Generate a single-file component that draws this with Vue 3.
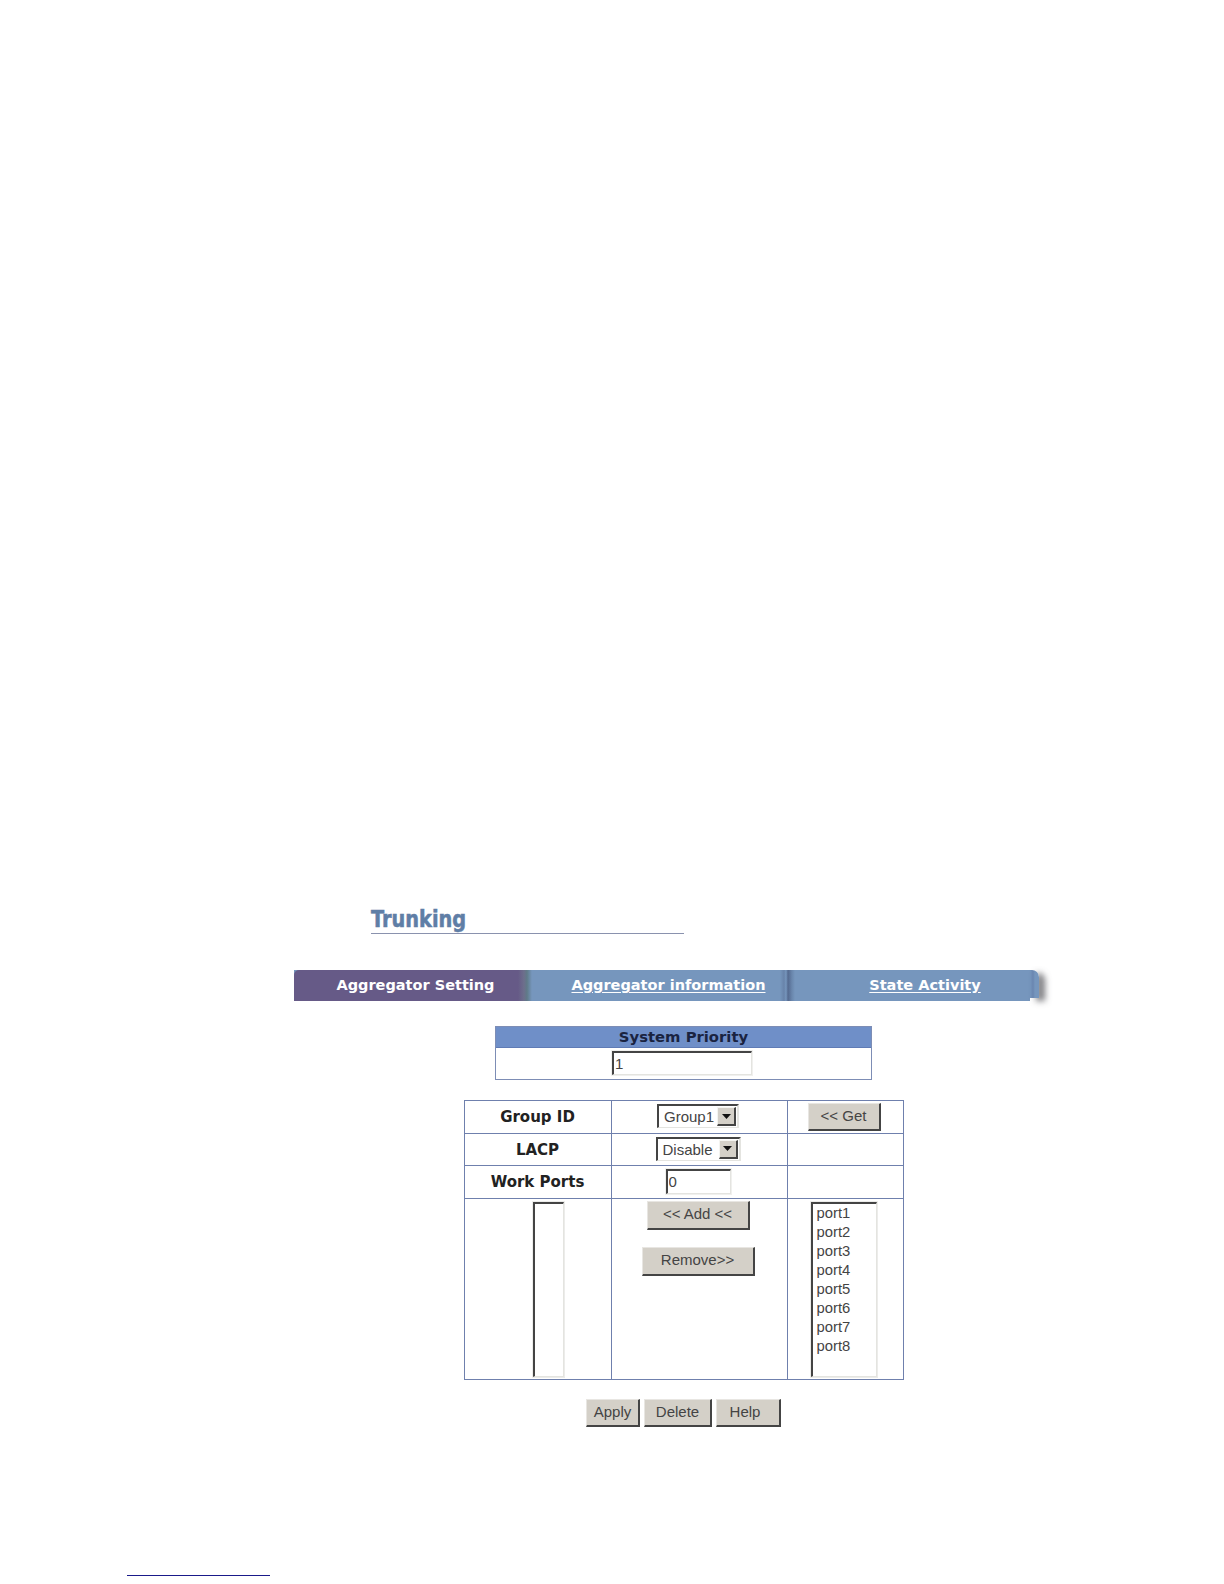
<template>
  <div class="page">

    <!-- TITLE -->
    <div class="title-block">
      <h1 class="title">Trunking</h1>
    </div>

    <!-- TABS -->
    <div class="tab-bar">
      <div class="tab tab-active">Aggregator Setting</div>
      <div class="tab tab-info"><a>Aggregator information</a></div>
      <div class="tab tab-state"><a>State Activity</a></div>
      <div class="tab-end"></div>
    </div>

    <div class="form-area">

      <!-- SYSTEM PRIORITY -->
      <div class="priority">
        <div class="priority-head">System Priority</div>
        <div class="priority-body">
          <input class="field priority-input" type="text" value="1" />
        </div>
      </div>

      <!-- GROUP TABLE -->
      <table class="group-table">
        <colgroup>
          <col class="col-a" />
          <col class="col-b" />
          <col class="col-c" />
        </colgroup>
        <tbody>
          <tr class="row-1">
            <th>Group ID</th>
            <td class="mid">
              <div class="select select-group">
                <span class="select-value">Group1</span>
                <span class="select-arrow"><svg width="9" height="5" viewBox="0 0 9 5"><path d="M0 0h9L4.5 5z" fill="#111" /></svg></span>
              </div>
            </td>
            <td><button class="btn btn-get">&lt;&lt; Get</button></td>
          </tr>
          <tr class="row-2">
            <th>LACP</th>
            <td class="mid">
              <div class="select select-lacp">
                <span class="select-value">Disable</span>
                <span class="select-arrow"><svg width="9" height="5" viewBox="0 0 9 5"><path d="M0 0h9L4.5 5z" fill="#111" /></svg></span>
              </div>
            </td>
            <td></td>
          </tr>
          <tr class="row-3">
            <th>Work Ports</th>
            <td class="mid"><input class="field ports-input" type="text" value="0" /></td>
            <td></td>
          </tr>
          <tr class="row-4">
            <td class="top"><div class="listbox list-left"></div></td>
            <td class="top">
              <button class="btn btn-add">&lt;&lt; Add &lt;&lt;</button>
              <button class="btn btn-remove">Remove&gt;&gt;</button>
            </td>
            <td class="top">
              <div class="listbox list-right">
                <div v-for="port in ports" :key="port" class="port">{{ port }}</div>
              </div>
            </td>
          </tr>
        </tbody>
      </table>

      <!-- ACTIONS -->
      <div class="actions">
        <button class="btn btn-apply">Apply</button>
        <button class="btn btn-delete">Delete</button>
        <button class="btn btn-help">Help</button>
      </div>

    </div>

    <!-- FOOTNOTE RULE -->
    <div class="foot-rule"></div>

  </div>
</template>

<script setup>
const ports = ['port1', 'port2', 'port3', 'port4', 'port5', 'port6', 'port7', 'port8']
</script>

<style>
html, body {
  background: #fff;
}
</style>

<style scoped>
.page {
  width: 1224px;
  height: 1584px;
  overflow: hidden;
  padding-top: 908px;
  box-sizing: border-box;
  background: #fff;
  font-family: "Liberation Sans", Arial, sans-serif;
}

.title-block {
  margin-left: 371px;
  width: 313px;
  height: 25px;
  border-bottom: 1px solid #8a92ae;
}

.title {
  margin: 0;
  font-family: "DejaVu Sans", sans-serif;
  font-size: 23px;
  font-weight: 700;
  line-height: 22px;
  color: #5f7ea6;
  transform: scaleX(0.84);
  transform-origin: left center;
  -webkit-text-stroke: 0.6px #5f7ea6;
}

.tab-bar {
  position: relative;
  display: flex;
  margin-top: 36px;
  margin-left: 294px;
  width: 736px;
  height: 31px;
  font-family: "DejaVu Sans", Verdana, sans-serif;
  font-size: 14.5px;
  font-weight: 700;
  line-height: 31px;
  color: #fff;
  background: #7696bd;
}

.tab {
  text-align: center;
  box-sizing: border-box;
}

.tab a {
  color: #fff;
  text-decoration: underline;
  text-underline-offset: 2px;
}

.tab-active {
  width: 238px;
  padding-left: 5px;
  background: linear-gradient(90deg, #665a87 0, #665a87 224px, #6d6f8c 230px, #5f7a88 233px, #7696bd 238px);
  border-top-left-radius: 5px;
}

.tab-info {
  width: 263px;
  padding-left: 10px;
  background: linear-gradient(90deg, #7696bd 0, #7696bd 248px, #6883aa 252px, #7696bd 254px, #54698f 256px, #6a87ad 260px, #7696bd 263px);
}

.tab-state {
  width: 235px;
  padding-left: 25px;
}

.tab-end {
  position: absolute;
  left: 736px;
  top: 0;
  width: 9px;
  height: 28px;
  background: linear-gradient(90deg, #7696bd 0, #6a86b0 3px, #7696bd 5px);
  border-top-right-radius: 7px;
  box-shadow: 6px 3px 6px 0 rgba(70, 70, 75, 0.7);
}

.form-area {
  display: flex;
  flex-direction: column;
  align-items: center;
  margin-left: 464px;
  width: 439px;
}

.priority {
  margin-top: 25px;
  width: 377px;
  height: 54px;
  box-sizing: border-box;
  border: 1px solid #7d8db5;
}

.priority-head {
  height: 20px;
  border-bottom: 1px solid #5f7bb5;
  background: #6f8fc8;
  font-family: "DejaVu Sans", Verdana, sans-serif;
  font-size: 14.8px;
  font-weight: 700;
  line-height: 19px;
  text-align: center;
  color: #1a2340;
}

.priority-body {
  display: flex;
  justify-content: center;
  padding: 3px 3px 0 0;
}

.field {
  display: block;
  box-sizing: border-box;
  margin: 0;
  padding: 0 0 0 1px;
  border-style: solid;
  border-width: 2px 1px 1px 2px;
  border-color: #444 #e4e4e0 #e4e4e0 #444;
  outline: 1px solid #f0f0ee;
  background: #fff;
  font-family: "Liberation Sans", Arial, sans-serif;
  font-size: 15px;
  color: #444;
}

.priority-input {
  width: 140px;
  height: 24px;
}

.group-table {
  margin-top: 20px;
  width: 439px;
  table-layout: fixed;
  border-collapse: collapse;
  border: 1px solid #6f80ad;
}

.col-a {
  width: 147px;
}

.col-b {
  width: 176px;
}

.col-c {
  width: 116px;
}

.group-table th,
.group-table td {
  padding: 0;
  border: 1px solid #6f80ad;
  text-align: center;
  vertical-align: middle;
}

.group-table td.mid {
  padding: 0 2px 2px 0;
}

.group-table th {
  font-family: "DejaVu Sans", Verdana, sans-serif;
  font-size: 15px;
  font-weight: 700;
  color: #222;
}

.row-1 {
  height: 33px;
}

.row-2 {
  height: 32px;
}

.row-3 {
  height: 33px;
}

.row-4 {
  height: 181px;
}

.group-table td.top {
  vertical-align: top;
}

.select {
  display: flex;
  align-items: center;
  box-sizing: border-box;
  margin: 0 auto;
  height: 24px;
  border-style: solid;
  border-width: 2px 2px 1px 2px;
  border-color: #444 #e4e4e0 #e4e4e0 #444;
  background: #fff;
  font-size: 15px;
  color: #444;
}

.select-group {
  width: 82px;
}

.select-lacp {
  width: 85px;
}

.select-value {
  flex: 1;
  padding-left: 5px;
  text-align: left;
}

.select-arrow {
  display: flex;
  align-items: center;
  justify-content: center;
  box-sizing: border-box;
  width: 19px;
  height: 19px;
  margin-right: 1px;
  background: #d4d0c8;
  border-style: solid;
  border-width: 1px 2px 2px 1px;
  border-color: #f4f4f0 #444 #444 #f4f4f0;
}

.ports-input {
  width: 65px;
  height: 25px;
  margin: 0 auto;
}

.btn {
  display: block;
  box-sizing: border-box;
  padding: 0 0 3px;
  height: 29px;
  border-style: solid;
  border-width: 1px 2px 2px 1px;
  border-color: #e8e6e2 #444 #444 #e8e6e2;
  background: #d4d0c8;
  font-family: "Liberation Sans", Arial, sans-serif;
  font-size: 15px;
  color: #444;
}

.btn-get {
  width: 73px;
  height: 28px;
  margin-left: 20px;
}

.btn-add {
  width: 103px;
  margin: 2px 0 0 35px;
}

.btn-remove {
  width: 113px;
  margin: 17px 0 0 30px;
}

.listbox {
  box-sizing: border-box;
  height: 175px;
  margin-top: 3px;
  border-style: solid;
  border-width: 2px 1px 1px 2px;
  border-color: #444 #e4e4e0 #e4e4e0 #444;
  outline: 1px solid #ececea;
  background: #fff;
  text-align: left;
}

.list-left {
  width: 31px;
  margin-left: 68px;
}

.list-right {
  width: 66px;
  margin-left: 23px;
  padding: 0 0 0 4px;
}

.port {
  height: 19px;
  font-size: 14.8px;
  line-height: 19px;
  color: #444;
}

.actions {
  display: flex;
  gap: 4px;
  margin-top: 19px;
}

.btn-apply {
  width: 54px;
  height: 28px;
}

.btn-delete {
  width: 68px;
  height: 28px;
}

.btn-help {
  width: 65px;
  height: 28px;
  padding-right: 6px;
}

.foot-rule {
  margin-top: 148px;
  margin-left: 127px;
  width: 143px;
  border-top: 1px solid #1a1a8a;
}
</style>
